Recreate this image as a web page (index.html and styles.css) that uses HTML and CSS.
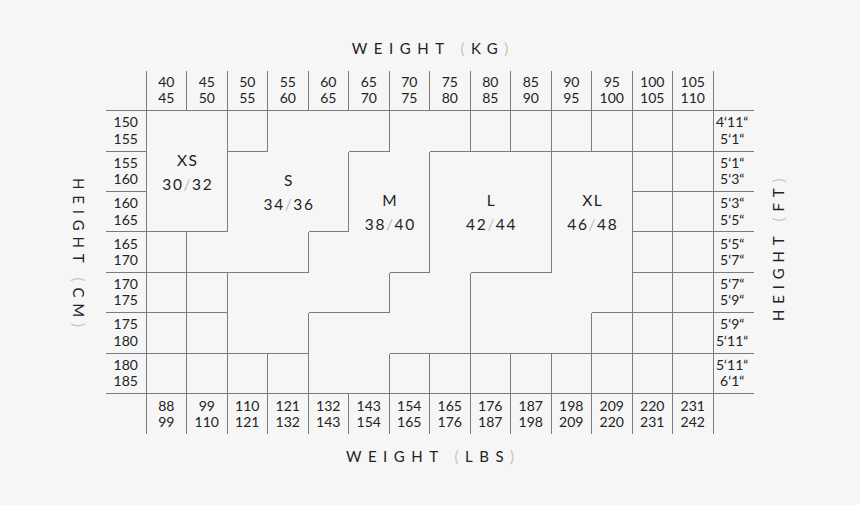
FILE: index.html
```html
<!DOCTYPE html>
<html lang="en">
<head>
<meta charset="utf-8">
<title>Size chart</title>
<link rel="stylesheet" href="styles.css">
</head>
<body>
<div class="sheet">
  <div class="title title-top">WEIGHT <span class="paren">(</span>KG<span class="paren">)</span></div>
  <div class="mid">
    <div class="vt vt-left">HEIGHT <span class="paren">(</span>CM<span class="paren">)</span></div>
    <div class="chart">
      <div class="cells">
        <!-- header row -->
        <div class="c r b"></div>
        <div class="c r b">40<br>45</div>
        <div class="c r b">45<br>50</div>
        <div class="c r b">50<br>55</div>
        <div class="c r b">55<br>60</div>
        <div class="c r b">60<br>65</div>
        <div class="c r b">65<br>70</div>
        <div class="c r b">70<br>75</div>
        <div class="c r b">75<br>80</div>
        <div class="c r b">80<br>85</div>
        <div class="c r b">85<br>90</div>
        <div class="c r b">90<br>95</div>
        <div class="c r b">95<br>100</div>
        <div class="c r b">100<br>105</div>
        <div class="c r b">105<br>110</div>
        <div class="c b"></div>
        <!-- row 1 -->
        <div class="c r b">150<br>155</div>
        <div class="c"></div>
        <div class="c r"></div>
        <div class="c r b"></div>
        <div class="c"></div>
        <div class="c"></div>
        <div class="c r b"></div>
        <div class="c"></div>
        <div class="c r b"></div>
        <div class="c r b"></div>
        <div class="c r b"></div>
        <div class="c r b"></div>
        <div class="c r b"></div>
        <div class="c r b"></div>
        <div class="c r b"></div>
        <div class="c b ft">4‘11“<br>5‘1“</div>
        <!-- row 2 -->
        <div class="c r b">155<br>160</div>
        <div class="c"></div>
        <div class="c r"></div>
        <div class="c"></div>
        <div class="c"></div>
        <div class="c r"></div>
        <div class="c"></div>
        <div class="c r"></div>
        <div class="c"></div>
        <div class="c"></div>
        <div class="c r"></div>
        <div class="c"></div>
        <div class="c r"></div>
        <div class="c r b"></div>
        <div class="c r b"></div>
        <div class="c b ft">5‘1“<br>5‘3“</div>
        <!-- row 3 -->
        <div class="c r b">160<br>165</div>
        <div class="c b"></div>
        <div class="c r b"></div>
        <div class="c"></div>
        <div class="c"></div>
        <div class="c r b"></div>
        <div class="c"></div>
        <div class="c r"></div>
        <div class="c"></div>
        <div class="c"></div>
        <div class="c r"></div>
        <div class="c"></div>
        <div class="c r"></div>
        <div class="c r b"></div>
        <div class="c r b"></div>
        <div class="c b ft">5‘3“<br>5‘5“</div>
        <!-- row 4 -->
        <div class="c r b">165<br>170</div>
        <div class="c r b"></div>
        <div class="c b"></div>
        <div class="c b"></div>
        <div class="c r b"></div>
        <div class="c"></div>
        <div class="c"></div>
        <div class="c r b"></div>
        <div class="c"></div>
        <div class="c b"></div>
        <div class="c r b"></div>
        <div class="c"></div>
        <div class="c r"></div>
        <div class="c r b"></div>
        <div class="c r b"></div>
        <div class="c b ft">5‘5“<br>5‘7“</div>
        <!-- row 5 -->
        <div class="c r b">170<br>175</div>
        <div class="c r b"></div>
        <div class="c r b"></div>
        <div class="c"></div>
        <div class="c"></div>
        <div class="c b"></div>
        <div class="c r b"></div>
        <div class="c"></div>
        <div class="c r"></div>
        <div class="c"></div>
        <div class="c"></div>
        <div class="c"></div>
        <div class="c r b"></div>
        <div class="c r b"></div>
        <div class="c r b"></div>
        <div class="c b ft">5‘7“<br>5‘9“</div>
        <!-- row 6 -->
        <div class="c r b">175<br>180</div>
        <div class="c r b"></div>
        <div class="c r b"></div>
        <div class="c b"></div>
        <div class="c r b"></div>
        <div class="c"></div>
        <div class="c"></div>
        <div class="c b"></div>
        <div class="c r b"></div>
        <div class="c b"></div>
        <div class="c b"></div>
        <div class="c r b"></div>
        <div class="c r b"></div>
        <div class="c r b"></div>
        <div class="c r b"></div>
        <div class="c b ft">5‘9“<br>5‘11“</div>
        <!-- row 7 -->
        <div class="c r b">180<br>185</div>
        <div class="c r b"></div>
        <div class="c r b"></div>
        <div class="c r b"></div>
        <div class="c r b"></div>
        <div class="c b"></div>
        <div class="c r b"></div>
        <div class="c r b"></div>
        <div class="c r b"></div>
        <div class="c r b"></div>
        <div class="c r b"></div>
        <div class="c r b"></div>
        <div class="c r b"></div>
        <div class="c r b"></div>
        <div class="c r b"></div>
        <div class="c b ft">5‘11“<br>6‘1“</div>
        <!-- footer row -->
        <div class="c r"></div>
        <div class="c r">88<br>99</div>
        <div class="c r">99<br>110</div>
        <div class="c r">110<br>121</div>
        <div class="c r">121<br>132</div>
        <div class="c r">132<br>143</div>
        <div class="c r">143<br>154</div>
        <div class="c r">154<br>165</div>
        <div class="c r">165<br>176</div>
        <div class="c r">176<br>187</div>
        <div class="c r">187<br>198</div>
        <div class="c r">198<br>209</div>
        <div class="c r">209<br>220</div>
        <div class="c r">220<br>231</div>
        <div class="c r">231<br>242</div>
        <div class="c"></div>
      </div>
      <div class="sizes">
        <div class="size size-xs"><span>XS</span><span>30<i>/</i>32</span></div>
        <div class="size size-s"><span>S</span><span>34<i>/</i>36</span></div>
        <div class="size size-m"><span>M</span><span>38<i>/</i>40</span></div>
        <div class="size size-l"><span>L</span><span>42<i>/</i>44</span></div>
        <div class="size size-xl"><span>XL</span><span>46<i>/</i>48</span></div>
      </div>
    </div>
    <div class="vt vt-right">HEIGHT <span class="paren">(</span>FT<span class="paren">)</span></div>
  </div>
  <div class="title title-bottom">WEIGHT <span class="paren">(</span>LBS<span class="paren">)</span></div>
</div>
</body>
</html>
```

FILE: styles.css
```css
html, body {
  margin: 0;
  padding: 0;
}

body {
  background: #f6f6f6;
  color: #232323;
  font-family: Lato, "Open Sans", "Liberation Sans", sans-serif;
  width: 860px;
  height: 505px;
  overflow: hidden;
}

.sheet {
  display: flex;
  flex-direction: column;
}

.title {
  text-align: center;
  font-size: 15px;
  line-height: 20px;
  letter-spacing: 6.5px;
  padding-left: 6.5px;
  white-space: nowrap;
}

.title-top {
  box-sizing: border-box;
  height: 70.8px;
  padding-top: 38px;
}

.title-bottom {
  margin-top: 12px;
}

.paren {
  color: #c4c4c4;
}

.mid {
  display: grid;
  grid-template-columns: 106px 648px 106px;
  align-items: center;
}

.vt {
  font-size: 15px;
  line-height: 20px;
  letter-spacing: 5.8px;
  white-space: nowrap;
  writing-mode: vertical-rl;
  padding-top: 5.8px;
}

.vt-left {
  justify-self: end;
  margin-right: 16.6px;
}

.vt-right {
  justify-self: start;
  margin-left: 14px;
  margin-bottom: 6px;
  transform: rotate(180deg);
}

.chart {
  display: grid;
}

.cells,
.sizes {
  grid-area: 1 / 1;
  display: grid;
  grid-template-columns: repeat(16, 40.5px);
  grid-template-rows: repeat(9, 40.4px);
}

.c {
  box-sizing: border-box;
  display: flex;
  align-items: center;
  justify-content: center;
  text-align: center;
  font-size: 14px;
  line-height: 16.5px;
}

.ft {
  padding-right: 3px;
}

.r {
  border-right: 1px solid #7c7c7c;
}

.b {
  border-bottom: 1px solid #7c7c7c;
}

.size {
  display: flex;
  flex-direction: column;
  align-items: center;
  justify-content: center;
  font-size: 15.5px;
  line-height: 24px;
  letter-spacing: 1.6px;
  padding-left: 1.6px;
}

.size i {
  font-style: normal;
  color: #bdbdbd;
}

.size-xs {
  grid-column: 2 / 4;
  grid-row: 2 / 5;
}

.size-s {
  grid-column: 4 / 7;
  grid-row: 3 / 5;
}

.size-m {
  grid-column: 7 / 9;
  grid-row: 3 / 6;
}

.size-l {
  grid-column: 9 / 12;
  grid-row: 3 / 6;
}

.size-xl {
  grid-column: 12 / 14;
  grid-row: 3 / 6;
}
```
